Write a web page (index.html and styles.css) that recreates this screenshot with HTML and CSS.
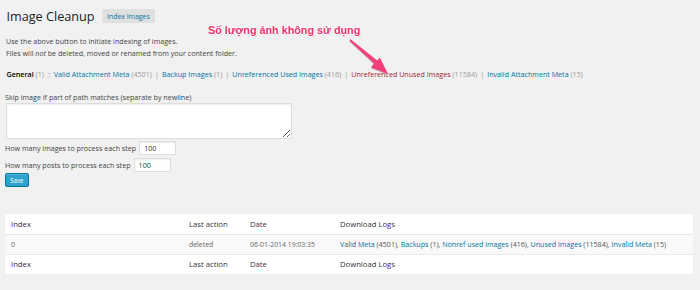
FILE: index.html
```html
<!DOCTYPE html>
<html lang="en">
<head>
  <meta charset="UTF-8" />
  <title>Image Cleanup</title>
  <link rel="stylesheet" href="styles.css">
</head>
<body>
  <div class="wrap">
    <div class="title-row">
      <h2>Image Cleanup</h2>
      <a class="add-new" href="#">Index Images</a>
    </div>

    <p class="intro">Use the above button to initiate indexing of images.<br>Files will <em>not</em> be deleted, moved or renamed from your content folder.</p>

    <ul class="subsubsub">
      <li><b>General</b> <span class="count">(1)</span> <span class="sep">::</span></li>
      <li><a href="#">Valid Attachment Meta</a> <span class="count">(4501)</span> <span class="sep">|</span></li>
      <li><a href="#">Backup Images</a> <span class="count">(1)</span> <span class="sep">|</span></li>
      <li><a href="#">Unreferenced Used Images</a> <span class="count">(416)</span> <span class="sep">|</span></li>
      <li><a class="unused" href="#">Unreferenced Unused Images</a> <span class="count">(11584)</span> <span class="sep">|</span></li>
      <li><a href="#">Invalid Attachment Meta</a> <span class="count">(15)</span></li>
    </ul>

    <form class="settings">
      <label class="block-label">Skip image if part of path matches (separate by newline)</label>
      <textarea class="skip"></textarea>
      <div class="field">
        <label>How many images to process each step</label>
        <input type="text" value="100">
      </div>
      <div class="field">
        <label>How many posts to process each step</label>
        <input type="text" value="100">
      </div>
      <button type="button" class="save">Save</button>
    </form>

    <table class="logs">
      <colgroup>
        <col class="c-index"><col class="c-action"><col class="c-date"><col>
      </colgroup>
      <thead>
        <tr><th>Index</th><th>Last action</th><th>Date</th><th>Download Logs</th></tr>
      </thead>
      <tbody>
        <tr>
          <td>0</td>
          <td>deleted</td>
          <td>06-01-2014 19:03:35</td>
          <td class="links"><a href="#">Valid Meta</a> (4501), <a href="#">Backups</a> (1), <a href="#">Nonref used images</a> (416), <a href="#">Unused images</a> (11584), <a href="#">Invalid Meta</a> (15)</td>
        </tr>
      </tbody>
      <tfoot>
        <tr><th>Index</th><th>Last action</th><th>Date</th><th>Download Logs</th></tr>
      </tfoot>
    </table>

    <div class="note">Số lượng ảnh không sử dụng</div>
    <svg class="arrow" width="60" height="50" viewBox="340 34 60 50">
      <polygon points="349.4,40.7 350.6,39.3 377.2,60.5 379.8,57.6 388,74 371,67.5 374,63.5" fill="#f13f79"/>
    </svg>
  </div>
</body>
</html>
```

FILE: styles.css
```css
* {
  box-sizing: border-box;
}

body {
  margin: 0;
  background: #f1f1f1;
  color: #444;
  font-family: 'Open Sans', sans-serif;
  font-size: 7.15px;
}

a {
  color: #0074a2;
  text-decoration: none;
}

.wrap {
  position: relative;
  padding: 8px 7px 0 5px;
}

.title-row {
  display: flex;
  align-items: center;
  gap: 7px;
  padding-left: 1.5px;
}

.title-row h2 {
  margin: 0;
  font-size: 12.65px;
  font-weight: 400;
  line-height: 17px;
  color: #222;
}

.add-new {
  background: #e0e0e0;
  font-size: 6.9px;
  line-height: 9px;
  padding: 2.5px 5.5px;
  margin-top: -1px;
}

.intro {
  margin: 11px 0 0 1px;
  line-height: 11.5px;
}

.subsubsub {
  list-style: none;
  margin: 10px 0 0 1.5px;
  padding: 0;
  display: flex;
  line-height: 11.5px;
  white-space: pre;
}

.subsubsub li::after {
  content: " ";
}

.subsubsub b {
  color: #000;
  font-weight: 600;
}

.subsubsub .count,
.subsubsub .sep {
  color: #999;
}

.subsubsub .sep {
  margin: 0 1.2px;
}

.subsubsub .unused {
  color: #a4242e;
}

.settings {
  margin-top: 11px;
}

.block-label {
  display: block;
  line-height: 11.5px;
}

.skip {
  display: block;
  width: 286px;
  height: 36px;
  margin: 0 0 2px 1px;
  border: 1px solid #ddd;
  background: #fff;
  box-shadow: inset 0 1px 2px rgba(0, 0, 0, 0.07);
}

.field {
  display: flex;
  align-items: center;
  gap: 3px;
  margin-bottom: 2.5px;
}

.field input {
  width: 37px;
  height: 14px;
  padding: 0 4px;
  border: 1px solid #ddd;
  background: #fff;
  font-family: 'Open Sans', sans-serif;
  font-size: 7.15px;
  color: #333;
  box-shadow: inset 0 1px 2px rgba(0, 0, 0, 0.07);
}

.save {
  display: block;
  width: 23.5px;
  height: 14px;
  margin: -1px 0 0;
  padding: 0;
  background: #2ea2cc;
  border: 1px solid #0074a2;
  border-radius: 2px;
  color: #fff;
  font-family: 'Open Sans', sans-serif;
  font-size: 6.2px;
  box-shadow: inset 0 1px 0 rgba(120, 200, 230, 0.5);
}

.logs {
  width: 688px;
  margin-top: 27px;
  border-collapse: collapse;
  table-layout: fixed;
  background: #fff;
  box-shadow: 0 1px 1px rgba(0, 0, 0, 0.06);
}

.c-index { width: 178px; }
.c-action { width: 61px; }
.c-date { width: 90px; }

.logs th,
.logs td {
  height: 20px;
  padding: 0 6px;
  text-align: left;
  white-space: nowrap;
}

.logs th {
  font-weight: 400;
  font-size: 7.7px;
  color: #333;
}

.logs td {
  font-size: 6.9px;
  color: #666;
}

.logs td.links {
  font-size: 7.1px;
  color: #555;
}

.logs tbody tr {
  background: #f9f9f9;
  border-top: 1px solid #e9e9e9;
  border-bottom: 1px solid #e9e9e9;
}

.note {
  position: absolute;
  left: 208px;
  top: 24px;
  font-family: 'Liberation Sans', Arial, sans-serif;
  font-size: 10.8px;
  font-weight: 700;
  color: #e8336f;
  text-shadow: 1px 0 0 #fff, -1px 0 0 #fff, 0 1px 0 #fff, 0 -1px 0 #fff, 1px 1px 1px rgba(0, 0, 0, 0.2);
}

.arrow {
  position: absolute;
  left: 340px;
  top: 34px;
  filter: drop-shadow(0 1px 0.5px rgba(0, 0, 0, 0.2));
}
```
